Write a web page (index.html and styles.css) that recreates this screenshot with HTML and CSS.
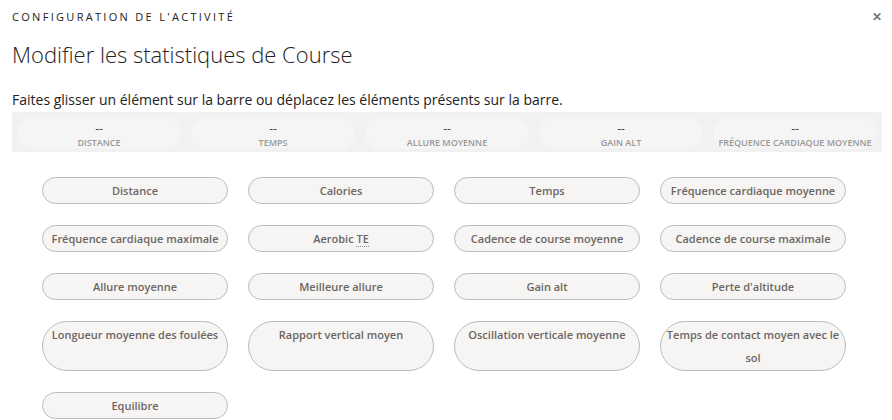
FILE: index.html
```html
<!DOCTYPE html>
<html lang="fr">
<head>
<meta charset="utf-8">
<link rel="stylesheet" href="styles.css">
</head>
<body>
<div class="modal">
  <div class="topline">
    <div class="kicker">CONFIGURATION DE L'ACTIVITÉ</div>
    <div class="close">✕</div>
  </div>
  <h1 class="title">Modifier les statistiques de Course</h1>
  <p class="hint">Faites glisser un élément sur la barre ou déplacez les éléments présents sur la barre.</p>
  <div class="bar">
    <div class="slot"><span class="val">--</span><span class="lbl">DISTANCE</span></div>
    <div class="slot"><span class="val">--</span><span class="lbl">TEMPS</span></div>
    <div class="slot"><span class="val">--</span><span class="lbl">ALLURE MOYENNE</span></div>
    <div class="slot"><span class="val">--</span><span class="lbl">GAIN ALT</span></div>
    <div class="slot"><span class="val">--</span><span class="lbl">FRÉQUENCE CARDIAQUE MOYENNE</span></div>
  </div>
  <div class="pills">
    <div class="pill">Distance</div>
    <div class="pill">Calories</div>
    <div class="pill">Temps</div>
    <div class="pill">Fréquence cardiaque moyenne</div>
    <div class="pill">Fréquence cardiaque maximale</div>
    <div class="pill">Aerobic <abbr class="abbr">TE</abbr></div>
    <div class="pill">Cadence de course moyenne</div>
    <div class="pill">Cadence de course maximale</div>
    <div class="pill">Allure moyenne</div>
    <div class="pill">Meilleure allure</div>
    <div class="pill">Gain alt</div>
    <div class="pill">Perte d'altitude</div>
    <div class="pill tall">Longueur moyenne des foulées</div>
    <div class="pill tall">Rapport vertical moyen</div>
    <div class="pill tall">Oscillation verticale moyenne</div>
    <div class="pill tall">Temps de contact moyen avec le sol</div>
    <div class="pill">Equilibre</div>
  </div>
</div>
</body>
</html>
```

FILE: styles.css
```css
html, body {
  margin: 0;
  padding: 0;
  background: #fff;
}
body {
  font-family: "Open Sans", "Liberation Sans", sans-serif;
  color: #222;
}
.modal {
  padding: 8px 10px 0 12px;
}
.topline {
  display: flex;
  justify-content: space-between;
  align-items: center;
  height: 17px;
}
.kicker {
  font-size: 11px;
  letter-spacing: 2.3px;
  color: #222;
}
.close {
  font-size: 12px;
  font-weight: 700;
  color: #777;
  margin-right: 0;
}
.title {
  margin: 14px 0 0;
  font-size: 22px;
  font-weight: 300;
  line-height: 30px;
  color: #222;
}
.hint {
  margin: 22px 0 0;
  font-size: 14px;
  line-height: 18px;
  color: #222;
}
.bar {
  margin-top: 3px;
  width: 870px;
  height: 40px;
  box-sizing: border-box;
  background: #f1f1f1;
  padding: 5px 5px 3px;
  display: flex;
  gap: 10px;
}
.slot {
  flex: 0 0 164px;
  background: #f5f5f5;
  border-radius: 16px;
  display: flex;
  flex-direction: column;
  align-items: center;
  justify-content: flex-start;
  padding-top: 6px;
}
.val {
  font-size: 12px;
  line-height: 12px;
  color: #444;
}
.lbl {
  margin-top: 1px;
  font-size: 9px;
  font-weight: 600;
  line-height: 14px;
  color: #999;
}
.pills {
  margin: 25px 0 0 30px;
  display: grid;
  grid-template-columns: repeat(4, 186px);
  column-gap: 20px;
  row-gap: 21px;
}
.pill {
  box-sizing: border-box;
  height: 27px;
  border: 1px solid #bbb;
  border-radius: 14px;
  background: #f7f5f3;
  font-size: 11px;
  font-weight: 600;
  color: #6b6663;
  text-align: center;
  line-height: 25px;
  white-space: nowrap;
}
.pill.tall {
  height: 50px;
  border-radius: 25px;
  white-space: normal;
  line-height: 23px;
  padding-top: 1px;
}
.abbr {
  text-decoration: none;
  border-bottom: 1px dotted #888;
  line-height: 12px;
}
```
